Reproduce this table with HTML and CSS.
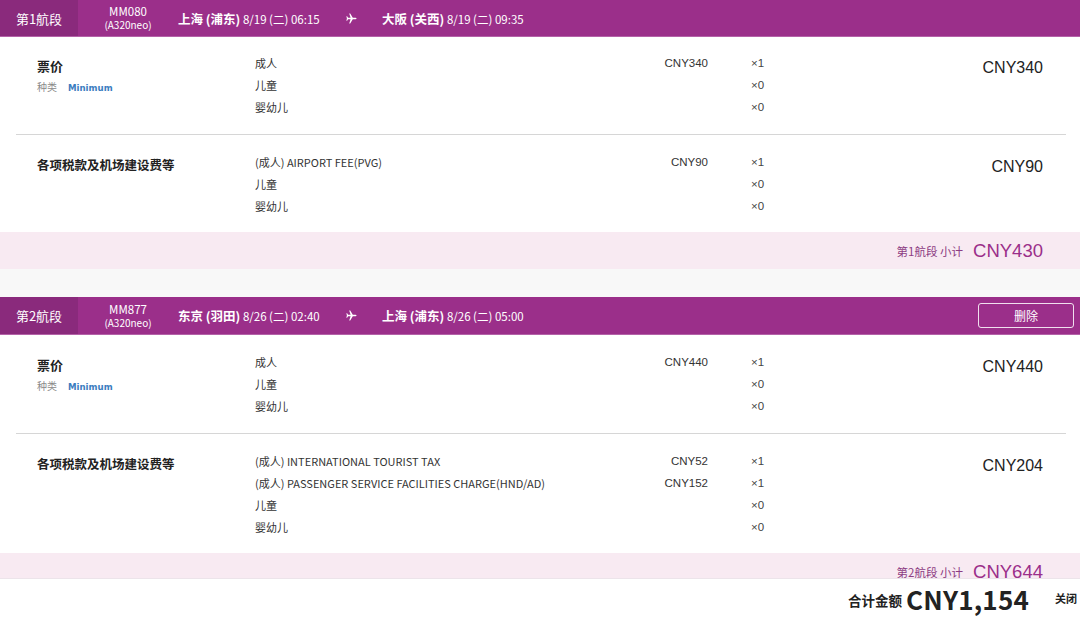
FILE: index.html
```html
<!DOCTYPE html>
<html lang="zh-CN">
<head>
<meta charset="utf-8">
<link rel="stylesheet" href="styles.css">
</head>
<body>
<div class="page">
  <section class="segment">
    <div class="seg-head">
      <div class="seg-label">第1航段</div>
      <div class="flight"><div class="fno">MM080</div><div class="ac">(A320neo)</div></div>
      <div class="place origin"><b>上海 (浦东)</b> <span>8/19 (二) 06:15</span></div>
      <svg class="plane" viewBox="0 0 12 12" width="11" height="11"><path d="M11.5 6 C11.5 5.5 11 5.2 10.4 5.2 H7.4 L4.6 0.6 H3.5 L5 5.2 H2.3 L1.2 3.6 H0.4 L1 6 L0.4 8.4 H1.2 L2.3 6.8 H5 L3.5 11.4 H4.6 L7.4 6.8 H10.4 C11 6.8 11.5 6.5 11.5 6Z" fill="#fff"/></svg>
      <div class="place"><b>大阪 (关西)</b> <span>8/19 (二) 09:35</span></div>
    </div>
    <div class="block">
      <div class="b-title"><div class="h">票价</div><div class="kind"><span class="k">种类</span><span class="v">Minimum</span></div></div>
      <div class="rows">
        <div class="row"><span class="d">成人</span><span class="p">CNY340</span><span class="q">×1</span></div>
        <div class="row"><span class="d">儿童</span><span class="p"></span><span class="q">×0</span></div>
        <div class="row"><span class="d">婴幼儿</span><span class="p"></span><span class="q">×0</span></div>
      </div>
      <div class="b-total">CNY340</div>
    </div>
    <div class="block">
      <div class="b-title"><div class="h h-tax">各项税款及机场建设费等</div></div>
      <div class="rows">
        <div class="row"><span class="d">(成人) AIRPORT FEE(PVG)</span><span class="p">CNY90</span><span class="q">×1</span></div>
        <div class="row"><span class="d">儿童</span><span class="p"></span><span class="q">×0</span></div>
        <div class="row"><span class="d">婴幼儿</span><span class="p"></span><span class="q">×0</span></div>
      </div>
      <div class="b-total">CNY90</div>
    </div>
    <div class="subtotal"><span class="sl">第1航段 小计</span><span class="sv">CNY430</span></div>
  </section>

  <section class="segment seg2">
    <div class="seg-head">
      <div class="seg-label">第2航段</div>
      <div class="flight"><div class="fno">MM877</div><div class="ac">(A320neo)</div></div>
      <div class="place origin"><b>东京 (羽田)</b> <span>8/26 (二) 02:40</span></div>
      <svg class="plane" viewBox="0 0 12 12" width="11" height="11"><path d="M11.5 6 C11.5 5.5 11 5.2 10.4 5.2 H7.4 L4.6 0.6 H3.5 L5 5.2 H2.3 L1.2 3.6 H0.4 L1 6 L0.4 8.4 H1.2 L2.3 6.8 H5 L3.5 11.4 H4.6 L7.4 6.8 H10.4 C11 6.8 11.5 6.5 11.5 6Z" fill="#fff"/></svg>
      <div class="place"><b>上海 (浦东)</b> <span>8/26 (二) 05:00</span></div>
      <button class="del">删除</button>
    </div>
    <div class="block first">
      <div class="b-title"><div class="h">票价</div><div class="kind"><span class="k">种类</span><span class="v">Minimum</span></div></div>
      <div class="rows">
        <div class="row"><span class="d">成人</span><span class="p">CNY440</span><span class="q">×1</span></div>
        <div class="row"><span class="d">儿童</span><span class="p"></span><span class="q">×0</span></div>
        <div class="row"><span class="d">婴幼儿</span><span class="p"></span><span class="q">×0</span></div>
      </div>
      <div class="b-total">CNY440</div>
    </div>
    <div class="block">
      <div class="b-title"><div class="h h-tax">各项税款及机场建设费等</div></div>
      <div class="rows">
        <div class="row"><span class="d">(成人) INTERNATIONAL TOURIST TAX</span><span class="p">CNY52</span><span class="q">×1</span></div>
        <div class="row"><span class="d">(成人) PASSENGER SERVICE FACILITIES CHARGE(HND/AD)</span><span class="p">CNY152</span><span class="q">×1</span></div>
        <div class="row"><span class="d">儿童</span><span class="p"></span><span class="q">×0</span></div>
        <div class="row"><span class="d">婴幼儿</span><span class="p"></span><span class="q">×0</span></div>
      </div>
      <div class="b-total">CNY204</div>
    </div>
    <div class="subtotal"><span class="sl">第2航段 小计</span><span class="sv">CNY644</span></div>
  </section>
</div>
<div class="footer">
  <span class="tl">合计金额</span><span class="tv">CNY1,154</span>
  <span class="close">关闭 <svg width="8" height="8" viewBox="0 0 8 8"><path d="M1 2.5 L4 5.5 L7 2.5" stroke="#333" stroke-width="1.3" fill="none"/></svg></span>
</div>
</body>
</html>
```

FILE: styles.css
```css
* { box-sizing: border-box; }
html, body { margin: 0; padding: 0; }
body {
  width: 1080px;
  height: 617px;
  overflow: hidden;
  background: #f8f8f8;
  font-family: "Noto Sans CJK SC", "Noto Sans", sans-serif;
  color: #222;
}
.page { display: flex; flex-direction: column; gap: 28px; }
.segment { background: #fff; }
.seg-head {
  height: 37px;
  background: #9b2f8a;
  border-bottom: 1px solid #b462a8;
  display: flex;
  align-items: center;
  color: #fff;
}
.seg2 .seg-head { height: 38px; }
.seg-label {
  width: 78px;
  align-self: stretch;
  background: #8a2a7c;
  display: flex;
  align-items: center;
  justify-content: center;
  font-size: 13px;
}
.flight {
  width: 100px;
  text-align: center;
  line-height: 13px;
}
.fno { font-size: 11.5px; }
.ac { font-size: 10px; }
.place { font-size: 11.5px; white-space: nowrap; }
.place b { font-size: 12.5px; font-weight: 700; }
.origin { width: 168px; }
.plane { margin-right: 25px; flex: none; }
.del {
  margin-left: auto;
  margin-right: 6px;
  width: 96px;
  height: 25px;
  border: 1px solid rgba(255,255,255,0.85);
  border-radius: 3px;
  background: transparent;
  color: #fff;
  font-family: "Noto Sans CJK SC", sans-serif;
  font-size: 12px;
}
.block {
  margin: 0 14px 0 16px;
  padding: 15px 23px 16px 21px;
  display: flex;
  border-bottom: 1px solid #d6d6d6;
}
.block.first { padding-top: 16px; }
.block + .block { border-bottom: none; padding-top: 16px; padding-bottom: 15px; }
.b-title { width: 218px; flex: none; }
.h { font-size: 13px; font-weight: 700; line-height: 22px; margin-top: 3px; }
.h-tax { font-size: 12.5px; }
.kind { font-size: 10px; line-height: 20px; }
.kind .k { color: #8a8a8a; }
.kind .v { color: #3b7dc0; font-weight: 700; margin-left: 11px; font-family: "DejaVu Sans", sans-serif; font-size: 8.6px; }
.rows { width: 556px; flex: none; }
.row {
  display: grid;
  grid-template-columns: 1fr 90px 60px;
  column-gap: 43px;
  height: 22px;
  align-items: center;
  font-size: 11px;
}
.row .d { color: #333; white-space: nowrap; }
.row .p { text-align: right; font-family: "Liberation Sans", Arial, sans-serif; font-size: 11.5px; color: #333; }
.row .q { font-family: "Liberation Sans", Arial, sans-serif; font-size: 11.5px; color: #444; }
.b-total {
  flex: 1;
  text-align: right;
  font-family: "Liberation Sans", Arial, sans-serif;
  font-size: 16px;
  line-height: 22px;
  margin-top: 5px;
  color: #222;
}
.subtotal {
  height: 37px;
  background: #f8eaf2;
  display: flex;
  align-items: center;
  justify-content: flex-end;
  padding-right: 37px;
}
.sl { font-size: 11.5px; color: #8d3d83; margin-right: 10px; }
.sv { font-family: "Liberation Sans", Arial, sans-serif; font-size: 18.5px; color: #9b2f8a; }
.footer {
  position: fixed;
  left: 0; right: 0; bottom: 0;
  height: 39px;
  background: #fff;
  border-top: 1px solid #ece4ea;
  display: flex;
  align-items: center;
  justify-content: flex-end;
}
.tl { font-size: 13.5px; font-weight: 700; margin-right: 4px; margin-top: 4px; }
.tv { font-size: 26px; font-weight: 700; letter-spacing: 0.2px; }
.close { font-size: 11px; font-weight: 700; margin-left: 26px; width: 25px; white-space: nowrap; overflow: hidden; }
.close svg { vertical-align: middle; }
```
